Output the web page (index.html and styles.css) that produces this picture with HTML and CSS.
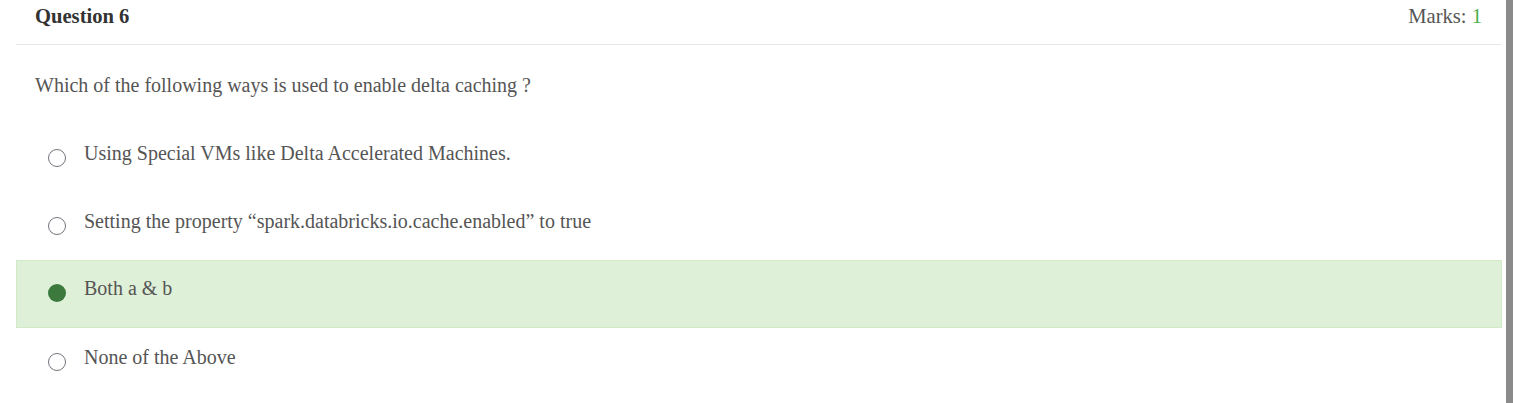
FILE: index.html
```html
<!DOCTYPE html>
<html lang="en">
<head>
<meta charset="utf-8">
<title>Question 6</title>
<link rel="stylesheet" href="styles.css">
</head>
<body>
<div class="page">
  <div class="card">
    <div class="card-header">
      <span class="q-title">Question 6</span>
      <span class="marks">Marks: <span class="marks-value">1</span></span>
    </div>
    <div class="card-body">
      <p class="q-text">Which of the following ways is used to enable delta caching ?</p>
      <ul class="options">
        <li class="option"><span class="radio"></span><span class="opt-text">Using Special VMs like Delta Accelerated Machines.</span></li>
        <li class="option"><span class="radio"></span><span class="opt-text">Setting the property “spark.databricks.io.cache.enabled” to true</span></li>
        <li class="option selected"><span class="radio"></span><span class="opt-text">Both a &amp; b</span></li>
        <li class="option"><span class="radio"></span><span class="opt-text">None of the Above</span></li>
      </ul>
    </div>
  </div>
</div>
<div class="scrollbar"></div>
</body>
</html>
```
FILE: styles.css
```css
html, body {
  margin: 0;
  padding: 0;
  height: 100%;
  background: #fff;
}
body {
  display: flex;
  font-family: "Liberation Serif", "Times New Roman", serif;
  font-size: 20px;
  color: #555;
  overflow: hidden;
}
.page {
  flex: 1;
  padding: 0 4px 0 16px;
}
.card {
  background: #fff;
}
.card-header {
  height: 45px;
  box-sizing: border-box;
  padding: 5px 20px 0 19px;
  display: flex;
  justify-content: space-between;
  align-items: flex-start;
  border-bottom: 1px solid #e8e8e8;
  line-height: 23px;
  font-size: 20.6px;
}
.q-title {
  font-weight: bold;
  color: #333;
}
.marks {
  color: #555;
}
.marks-value {
  color: #4cae4c;
}
.card-body {
  padding: 29px 0 0 0;
}
.q-text {
  margin: 0 0 27px 19px;
  line-height: 23px;
}
.options {
  list-style: none;
  margin: 0;
  padding: 0;
}
.option {
  height: 68px;
  box-sizing: border-box;
  display: flex;
  align-items: flex-start;
  padding: 17px 0 0 32px;
  border: 1px solid transparent;
  border-left: 0;
  border-right: 0;
  line-height: 23px;
}
.option.selected {
  background: #dff0d8;
  border: 1px solid #d0e9c6;
  padding-top: 16px;
  padding-left: 31px;
}
.radio {
  width: 18px;
  height: 18px;
  box-sizing: border-box;
  border: 1.6px solid #72767c;
  border-radius: 50%;
  margin-top: 7px;
  margin-right: 18px;
  flex: none;
}
.option.selected .radio {
  border: 0;
  background: #3b7a3c;
  width: 18px;
  height: 18px;
}
.scrollbar {
  width: 7px;
  height: 100%;
  background: #8a8a8a;
  flex: none;
}
```
